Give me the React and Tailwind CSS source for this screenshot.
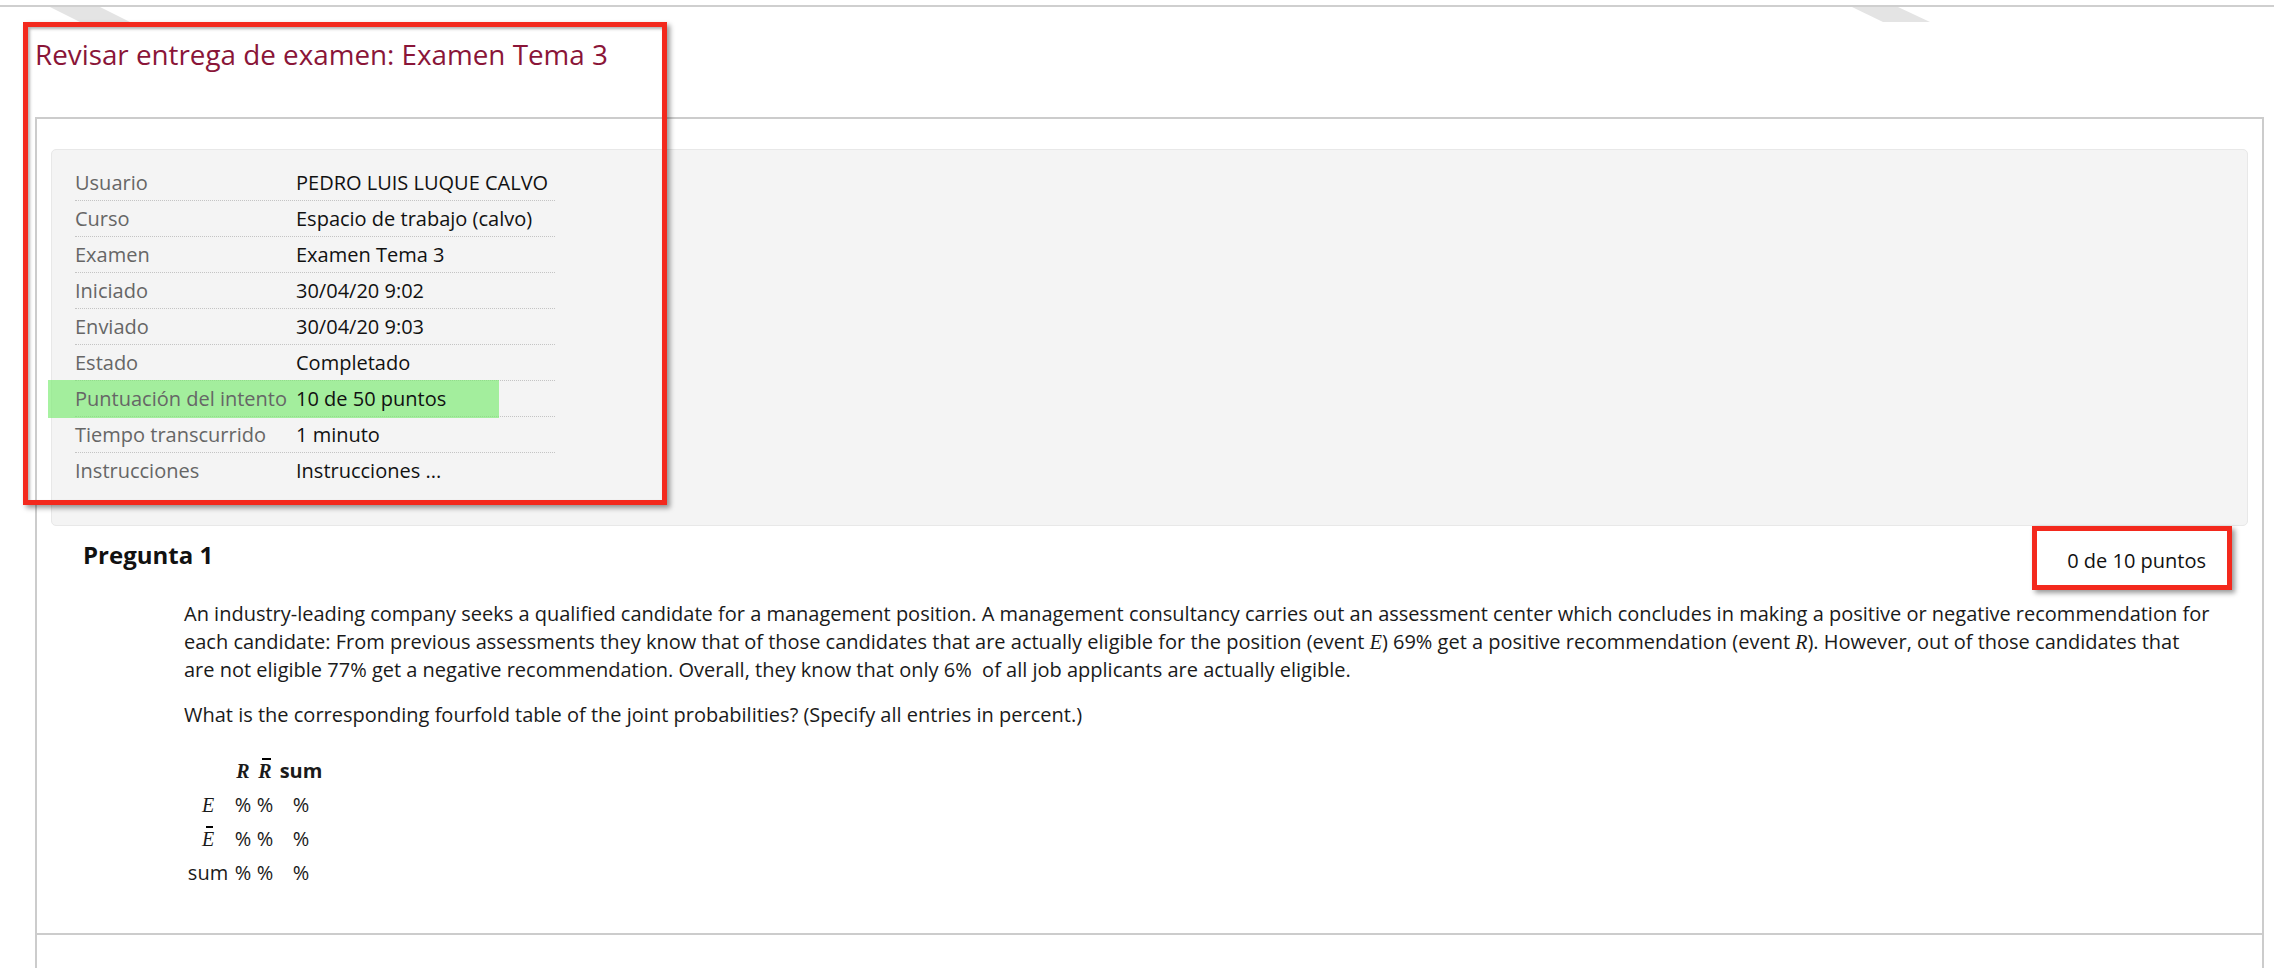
import React from 'react';

const rows = [
  ['Usuario', 'PEDRO LUIS LUQUE CALVO'],
  ['Curso', 'Espacio de trabajo (calvo)'],
  ['Examen', 'Examen Tema 3'],
  ['Iniciado', '30/04/20 9:02'],
  ['Enviado', '30/04/20 9:03'],
  ['Estado', 'Completado'],
  ['Puntuación del intento', '10 de 50 puntos', true],
  ['Tiempo transcurrido', '1 minuto'],
  ['Instrucciones', 'Instrucciones ...'],
];

const M = ({ children, bold }) => (
  <span className={`font-['Liberation_Serif',serif] italic ${bold ? 'font-bold' : ''}`}>{children}</span>
);

const Bar = ({ children, bold }) => (
  <span className="relative inline-block">
    <M bold={bold}>{children}</M>
    <span className="absolute left-[4px] right-[1px] top-[4px] h-[2px] bg-black" />
  </span>
);

const cells = ['%', '%', '%'];

const App = () => {
  return (
    <div className="relative min-h-[968px] w-full bg-white font-['Open_Sans',sans-serif] overflow-hidden">
      {/* top rule + tab shadows */}
      <div className="h-[5px]" />
      <div className="h-[2px] bg-[#cfcfcf]" />
      <svg className="absolute left-0 top-0 pointer-events-none" width="2274" height="30">
        <polygon points="50,7 100,7 130,22 80,22" fill="#e4e4e4" />
        <polygon points="1852,7 1898,7 1930,22 1883,22" fill="#e4e4e4" />
      </svg>

      <h1 className="relative mt-[29px] pl-[35px] text-[27.8px] leading-[36px] text-[#8a1538] font-normal">
        Revisar entrega de examen: Examen Tema 3
      </h1>

      {/* main panel */}
      <div className="mt-[45px] ml-[35px] mr-[10px] border-2 border-b-0 border-[#cccccc]">
        <div className="mx-[14px] mt-[30px] bg-[#f4f4f4] border border-[#e8e8e8] rounded-[5px] pl-[23px] pt-[15px] pb-[36px]">
          <div className="w-[480px]">
            {rows.map(([label, value, hl], i) => (
              <div
                key={label}
                className={`relative flex items-center h-[36px] text-[20px] leading-[36px] ${i < rows.length - 1 ? 'border-b border-dotted border-[#c4c4c4]' : ''}`}
              >
                {hl && <span className="absolute -left-[27px] -top-[1px] w-[451px] h-[38px] bg-[rgba(120,235,110,0.65)]" />}
                <span className="relative w-[221px] text-[#666666] whitespace-nowrap">{label}</span>
                <span className="relative text-[#111111] whitespace-nowrap">{value}</span>
              </div>
            ))}
          </div>
        </div>

        {/* question */}
        <div className="border-b-2 border-[#cccccc] pb-[43px]">
          <div className="flex items-start justify-between">
            <h3 className="mt-[13px] pl-[46px] text-[24px] leading-[32px] font-bold text-[#111111]">Pregunta 1</h3>
            <div className="mr-[30px] border-[5px] border-[#f3291d] bg-white pl-[30px] pr-[21px] pt-[16px] pb-[10px] text-[20px] leading-[28px] text-[#111111] shadow-[3px_3px_5px_rgba(0,0,0,0.4)]">
              0 de 10 puntos
            </div>
          </div>

          <div className="ml-[147px] w-[2029px] text-[20px] leading-[28px] text-[#1a1a1a]">
            <p className="mt-[10px]">
              An industry-leading company seeks a qualified candidate for a management position. A management consultancy carries out an assessment center which concludes in making a positive or negative recommendation for each candidate: From previous assessments they know that of those candidates that are actually eligible for the position (event <M>E</M>) 69% get a positive recommendation (event <M>R</M>). However, out of those candidates that are not eligible 77% get a negative recommendation. Overall, they know that only 6%&nbsp; of all job applicants are actually eligible.
            </p>
            <p className="mt-[17px]">
              What is the corresponding fourfold table of the joint probabilities? (Specify all entries in percent.)
            </p>

            <div className="mt-[25px] grid grid-cols-[48px_22px_22px_50px] text-center leading-[34px]">
              <span />
              <span><M bold>R</M></span>
              <span><Bar bold>R</Bar></span>
              <span className="font-bold">sum</span>

              <span><M>E</M></span>
              {cells.map((c, i) => <span key={'a' + i}>{c}</span>)}

              <span><Bar>E</Bar></span>
              {cells.map((c, i) => <span key={'b' + i}>{c}</span>)}

              <span>sum</span>
              {cells.map((c, i) => <span key={'c' + i}>{c}</span>)}
            </div>
          </div>
        </div>
        <div className="h-[80px]" />
      </div>

      {/* annotation box */}
      <div className="absolute left-[23px] top-[22px] w-[644px] h-[483px] border-[5px] border-[#f3291d] shadow-[3px_3px_5px_rgba(0,0,0,0.4),inset_2px_2px_3px_rgba(0,0,0,0.3)] pointer-events-none" />
    </div>
  );
};

export default App;
